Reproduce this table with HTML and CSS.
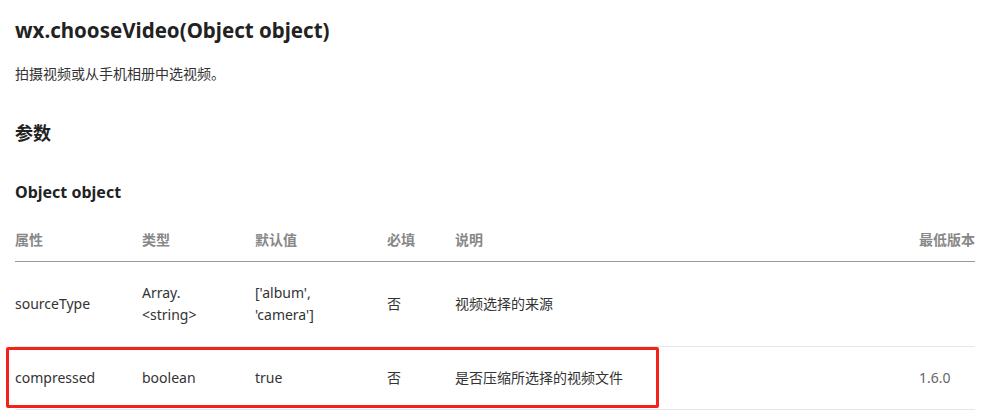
FILE: index.html
```html
<!DOCTYPE html>
<html lang="zh-CN">

<head>
    <meta charset="UTF-8">
    <meta name="viewport" content="width=device-width, initial-scale=1.0">
    <title>wx.chooseVideo</title>
    <link rel="stylesheet" href="styles.css">
</head>

<body>
    <main class="doc">
        <h1 class="api-title">wx.chooseVideo(Object object)</h1>
        <p class="api-desc">拍摄视频或从手机相册中选视频。</p>

        <h2 class="section-title">参数</h2>
        <h3 class="sub-title">Object object</h3>

        <div class="table-wrap">
            <table class="params">
                <colgroup>
                    <col class="c-name">
                    <col class="c-type">
                    <col class="c-default">
                    <col class="c-required">
                    <col class="c-desc">
                    <col class="c-version">
                </colgroup>
                <thead>
                    <tr>
                        <th>属性</th>
                        <th>类型</th>
                        <th>默认值</th>
                        <th>必填</th>
                        <th>说明</th>
                        <th>最低版本</th>
                    </tr>
                </thead>
                <tbody>
                    <tr>
                        <td>sourceType</td>
                        <td>Array.<br>&lt;string&gt;</td>
                        <td>['album',<br>'camera']</td>
                        <td>否</td>
                        <td>视频选择的来源</td>
                        <td></td>
                    </tr>
                    <tr class="marked">
                        <td>compressed</td>
                        <td>boolean</td>
                        <td>true</td>
                        <td>否</td>
                        <td>是否压缩所选择的视频文件</td>
                        <td class="version">1.6.0</td>
                    </tr>
                </tbody>
            </table>
            <div class="highlight"></div>
        </div>
    </main>
</body>

</html>
```

FILE: styles.css
```css
* {
    margin: 0;
    padding: 0;
    box-sizing: border-box;
}

body {
    font-family: "Noto Sans", "Noto Sans CJK SC", sans-serif;
    color: #333;
    background-color: #fff;
}

.doc {
    padding: 0 15px;
}

.api-title {
    font-size: 20.5px;
    font-weight: 700;
    line-height: 28px;
    padding-top: 16px;
    color: #222;
}

.api-desc {
    font-size: 14px;
    line-height: 22px;
    margin-top: 19px;
    color: #333;
}

.section-title {
    font-size: 18px;
    font-weight: 700;
    line-height: 26px;
    margin-top: 35px;
    color: #222;
}

.sub-title {
    font-size: 16px;
    font-weight: 700;
    line-height: 24px;
    margin-top: 34px;
    color: #222;
}

.table-wrap {
    position: relative;
    margin-top: 15px;
}

.params {
    width: 100%;
    border-collapse: collapse;
    table-layout: fixed;
    font-size: 14px;
    line-height: 22px;
}

.c-name { width: 127px; }
.c-type { width: 113px; }
.c-default { width: 132px; }
.c-required { width: 68px; }
.c-version { width: 56px; }

.params th {
    text-align: left;
    font-weight: 700;
    color: #888;
    padding: 10px 0 10px;
    border-bottom: 1px solid #999;
    white-space: nowrap;
}

.params td {
    padding: 20px 0;
    border-bottom: 1px solid #e6e6e6;
    vertical-align: middle;
    color: #333;
}

.params td.version {
    color: #666;
}

.highlight {
    position: absolute;
    left: -9px;
    bottom: 2px;
    width: 653px;
    height: 61px;
    border: 3px solid #f4221a;
    border-radius: 2px;
}
```
